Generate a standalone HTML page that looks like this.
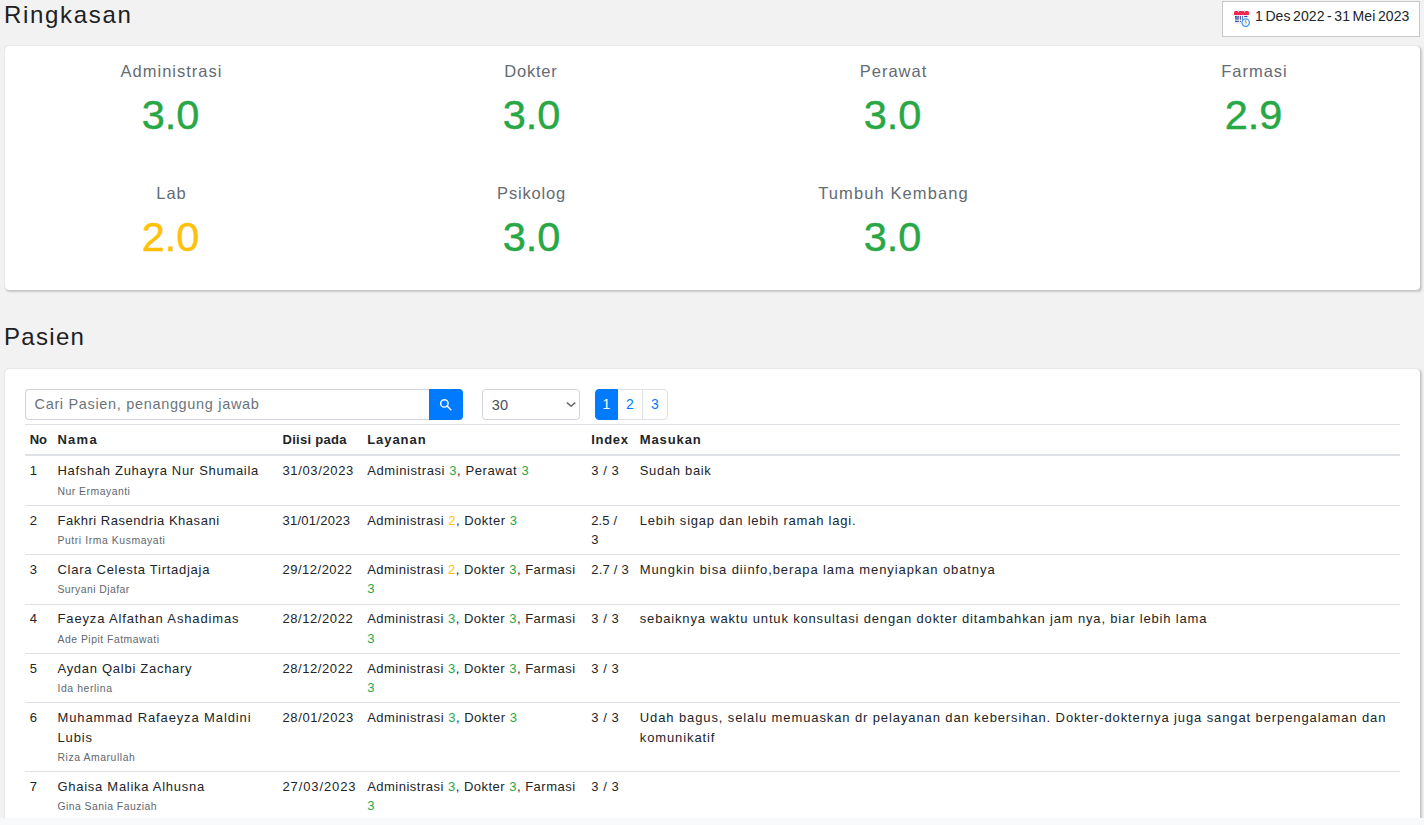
<!DOCTYPE html>
<html>
<head>
<meta charset="utf-8">
<style>
*{box-sizing:border-box;}
html,body{margin:0;padding:0;}
body{width:1424px;height:825px;overflow:hidden;background:#f2f2f2;font-family:"Liberation Sans",sans-serif;color:#212529;position:relative;}
.abs{position:absolute;}
.title{position:absolute;left:5px;font-size:24px;line-height:30px;color:#1d2124;letter-spacing:1.4px;white-space:nowrap;}
.datebox{position:absolute;left:1222px;top:1px;width:198px;height:36px;background:#fff;border:1px solid #c8c8c8;}
.datebox .txt{position:absolute;left:32px;top:5px;font-size:14px;line-height:18px;letter-spacing:0.1px;word-spacing:-1.5px;white-space:nowrap;color:#212529;}
.card{position:absolute;background:#fff;border-radius:4px;box-shadow:0 0 1px rgba(0,0,0,.3),1.5px 1.2px 2px rgba(0,0,0,.17);}
.sum{position:absolute;width:361px;text-align:center;}
.sum .lbl{position:absolute;left:1px;right:-1px;font-size:16.5px;line-height:20px;color:#646b73;letter-spacing:1.0px;white-space:nowrap;}
.sum .num{position:absolute;left:0;right:0;font-size:41.5px;line-height:46px;white-space:nowrap;-webkit-text-stroke:0.45px currentColor;}
.g{color:#28a745;}
.y{color:#ffc107;}
.input{position:absolute;left:25px;top:389px;width:405px;height:31px;border:1px solid #ced4da;border-radius:4px 0 0 4px;border-right:none;background:#fff;}
.input .ph{position:absolute;left:8.5px;top:5.4px;font-size:14.5px;line-height:18px;color:#6c757d;letter-spacing:0.67px;white-space:nowrap;}
.btn{position:absolute;left:429px;top:389px;width:34px;height:31px;background:#007bff;border-radius:0 4px 4px 0;}
.sel{position:absolute;left:482px;top:389px;width:98px;height:31px;border:1px solid #ced4da;border-radius:3.5px;background:#fff;}
.sel .v{position:absolute;left:8.8px;top:6px;font-size:14.5px;line-height:18px;color:#495057;letter-spacing:0.1px;}
.pgi{position:absolute;top:389px;height:31px;border:1px solid #dee2e6;background:#fff;font-size:14px;line-height:29px;text-align:center;color:#007bff;}
table{position:absolute;left:25px;top:424px;width:1375px;border-collapse:collapse;table-layout:fixed;font-size:13px;}
td,th{padding:4.8px;vertical-align:top;text-align:left;line-height:19.4px;white-space:nowrap;letter-spacing:0.6px;}
th{padding-bottom:5.2px;font-weight:bold;border-top:1px solid #dee2e6;border-bottom:2px solid #dee2e6;letter-spacing:0.45px;}
td{border-top:1px solid #dee2e6;}
tbody tr:first-child td{border-top:none;}
small{font-size:10.4px;color:#61686f;letter-spacing:0.4px;line-height:0;}
</style>
</head>
<body>
<div class="title" style="top:0px;left:3.9px;letter-spacing:1.7px;">Ringkasan</div>
<div class="datebox">
  <svg class="abs" style="left:11px;top:8px" width="18" height="18" viewBox="0 0 18 18">
    <rect x="0.5" y="5" width="14" height="8" fill="#f6f8fe"/>
    <rect x="0.5" y="12.3" width="10" height="1.4" fill="#dfe6fb"/>
    <rect x="0.1" y="0.9" width="14.8" height="4" rx="1.3" fill="#f5274e"/>
    <rect x="0.1" y="2.6" width="14.8" height="2.3" fill="#f5274e"/>
    <path d="M3.6 0.9 L4.45 2.6 L5.3 0.9 Z M9.7 0.9 L10.55 2.6 L11.4 0.9 Z" fill="#fbd3dc"/>
    <rect x="4.05" y="0" width="0.8" height="2.2" fill="#c9d9ee"/>
    <rect x="10.15" y="0" width="0.8" height="2.2" fill="#c9d9ee"/>
    <g fill="#34489a">
      <rect x="1.0" y="5.9" width="1.8" height="1.2"/><rect x="3.4" y="5.9" width="1.4" height="1.2"/><rect x="5.8" y="5.9" width="1.1" height="1.2"/><rect x="8.1" y="5.9" width="0.8" height="1.2"/><rect x="10.2" y="5.9" width="3.3" height="1.2"/>
      <rect x="5.8" y="7.1" width="1.1" height="2.6"/><rect x="8.1" y="7.1" width="0.8" height="2.6"/>
      <rect x="1.0" y="10.7" width="3.8" height="1.2"/><rect x="5.8" y="10.7" width="1.1" height="1.2"/>
    </g>
    <rect x="1.0" y="7.1" width="3.8" height="2.6" fill="#5f6fb5"/>
    <circle cx="11.7" cy="12.6" r="3.7" fill="#f4f9ff" stroke="#3f9cf3" stroke-width="1.25"/>
    <path d="M11.7 12.6 V10.1 M11.7 12.6 L12.9 13.1" stroke="#4a4f66" stroke-width="0.6" fill="none"/>
    <circle cx="11.7" cy="12.7" r="0.75" fill="#f2c21b"/>
  </svg>
  <div class="txt">1 Des 2022 - 31 Mei 2023</div>
</div>

<div class="card" style="left:5px;top:46px;width:1415px;height:244px;">
  <div class="sum" style="left:-15px;top:0;"><div class="lbl" style="top:15px">Administrasi</div><div class="num g" style="top:46px">3.0</div></div>
  <div class="sum" style="left:346px;top:0;"><div class="lbl" style="top:15px;letter-spacing:0.8px;left:-0.6px;right:0.6px">Dokter</div><div class="num g" style="top:46px">3.0</div></div>
  <div class="sum" style="left:707px;top:0;"><div class="lbl" style="top:15px">Perawat</div><div class="num g" style="top:46px">3.0</div></div>
  <div class="sum" style="left:1068px;top:0;"><div class="lbl" style="top:15px">Farmasi</div><div class="num g" style="top:46px">2.9</div></div>
  <div class="sum" style="left:-15px;top:122px;"><div class="lbl" style="top:15px">Lab</div><div class="num y" style="top:46px">2.0</div></div>
  <div class="sum" style="left:346px;top:122px;"><div class="lbl" style="top:15px;letter-spacing:0.8px;left:0;right:0">Psikolog</div><div class="num g" style="top:46px">3.0</div></div>
  <div class="sum" style="left:707px;top:122px;"><div class="lbl" style="top:15px;letter-spacing:1.1px">Tumbuh Kembang</div><div class="num g" style="top:46px">3.0</div></div>
</div>

<div class="title" style="top:321.7px;left:4.0px;letter-spacing:1.3px;">Pasien</div>

<div class="card" style="left:5px;top:369px;width:1415px;height:470px;"></div>

<div class="input"><div class="ph">Cari Pasien, penanggung jawab</div></div>
<div class="btn">
  <svg class="abs" style="left:9px;top:8px" width="16" height="16" viewBox="0 0 16 16">
    <circle cx="6.4" cy="6.4" r="3.7" fill="none" stroke="#fff" stroke-width="1.45"/>
    <path d="M9.1 9.1 L12.8 12.8" stroke="#fff" stroke-width="1.45" stroke-linecap="round"/>
  </svg>
</div>
<div class="sel"><div class="v">30</div>
  <svg class="abs" style="left:82.8px;top:11.6px" width="10" height="7" viewBox="0 0 10 7"><path d="M1.3 0.9 L5.1 4.3 L8.9 0.9" fill="none" stroke="#666" stroke-width="1.45" stroke-linecap="round" stroke-linejoin="round"/></svg>
</div>
<div class="pgi" style="left:595px;width:23px;background:#007bff;border-color:#007bff;color:#fff;border-radius:4px 0 0 4px;">1</div>
<div class="pgi" style="left:618px;width:25px;border-left:none;">2</div>
<div class="pgi" style="left:642px;width:26px;border-radius:0 4px 4px 0;">3</div>

<table>
<colgroup><col style="width:27.7px"><col style="width:225px"><col style="width:84.7px"><col style="width:224.1px"><col style="width:48.5px"><col></colgroup>
<thead><tr><th style="letter-spacing:-0.2px">No</th><th style="letter-spacing:1.25px">Nama</th><th style="letter-spacing:0.3px">Diisi pada</th><th style="letter-spacing:0.95px">Layanan</th><th style="letter-spacing:0.7px">Index</th><th style="letter-spacing:0.88px">Masukan</th></tr></thead>
<tbody>
<tr><td>1</td><td><span style="letter-spacing:0.69px">Hafshah Zuhayra Nur Shumaila</span><br><small style="letter-spacing:0.5px">Nur Ermayanti</small></td><td style="letter-spacing:0.64px">31/03/2023</td><td style="letter-spacing:0.59px">Administrasi <span class="g">3</span>, Perawat <span class="g">3</span></td><td style="letter-spacing:0.52px">3 / 3</td><td style="letter-spacing:0.67px">Sudah baik</td></tr>
<tr><td>2</td><td><span style="letter-spacing:0.52px">Fakhri Rasendria Khasani</span><br><small style="letter-spacing:0.58px">Putri Irma Kusmayati</small></td><td style="letter-spacing:0.26px">31/01/2023</td><td style="letter-spacing:0.51px">Administrasi <span class="y">2</span>, Dokter <span class="g">3</span></td><td style="letter-spacing:0.12px">2.5 /<br>3</td><td style="letter-spacing:0.78px">Lebih sigap dan lebih ramah lagi.</td></tr>
<tr><td>3</td><td><span style="letter-spacing:0.73px">Clara Celesta Tirtadjaja</span><br><small style="letter-spacing:0.46px">Suryani Djafar</small></td><td style="letter-spacing:0.5px">29/12/2022</td><td style="letter-spacing:0.49px">Administrasi <span class="y">2</span>, Dokter <span class="g">3</span>, Farmasi<br><span class="g">3</span></td><td style="letter-spacing:0.23px">2.7 / 3</td><td style="letter-spacing:0.9px">Mungkin bisa diinfo,berapa lama menyiapkan obatnya</td></tr>
<tr><td>4</td><td><span style="letter-spacing:0.86px">Faeyza Alfathan Ashadimas</span><br><small style="letter-spacing:0.51px">Ade Pipit Fatmawati</small></td><td style="letter-spacing:0.57px">28/12/2022</td><td style="letter-spacing:0.49px">Administrasi <span class="g">3</span>, Dokter <span class="g">3</span>, Farmasi<br><span class="g">3</span></td><td style="letter-spacing:0.52px">3 / 3</td><td style="letter-spacing:0.83px">sebaiknya waktu untuk konsultasi dengan dokter ditambahkan jam nya, biar lebih lama</td></tr>
<tr><td>5</td><td><span style="letter-spacing:0.72px">Aydan Qalbi Zachary</span><br><small style="letter-spacing:0.59px">Ida herlina</small></td><td style="letter-spacing:0.57px">28/12/2022</td><td style="letter-spacing:0.49px">Administrasi <span class="g">3</span>, Dokter <span class="g">3</span>, Farmasi<br><span class="g">3</span></td><td style="letter-spacing:0.52px">3 / 3</td><td style="letter-spacing:0.6px"></td></tr>
<tr><td>6</td><td><span style="letter-spacing:0.88px">Muhammad Rafaeyza Maldini<br>Lubis</span><br><small style="letter-spacing:0.57px">Riza Amarullah</small></td><td style="letter-spacing:0.62px">28/01/2023</td><td style="letter-spacing:0.51px">Administrasi <span class="g">3</span>, Dokter <span class="g">3</span></td><td style="letter-spacing:0.52px">3 / 3</td><td style="letter-spacing:0.89px">Udah bagus, selalu memuaskan dr pelayanan dan kebersihan. Dokter-dokternya juga sangat berpengalaman dan<br>komunikatif</td></tr>
<tr><td>7</td><td><span style="letter-spacing:0.72px">Ghaisa Malika Alhusna</span><br><small style="letter-spacing:0.46px">Gina Sania Fauziah</small></td><td style="letter-spacing:0.89px">27/03/2023</td><td style="letter-spacing:0.49px">Administrasi <span class="g">3</span>, Dokter <span class="g">3</span>, Farmasi<br><span class="g">3</span></td><td style="letter-spacing:0.52px">3 / 3</td><td style="letter-spacing:0.6px"></td></tr>

</tbody>
</table>
<div class="abs" style="left:0;top:818px;width:1424px;height:7px;background:#f8f9fa;"></div>
</body>
</html>
